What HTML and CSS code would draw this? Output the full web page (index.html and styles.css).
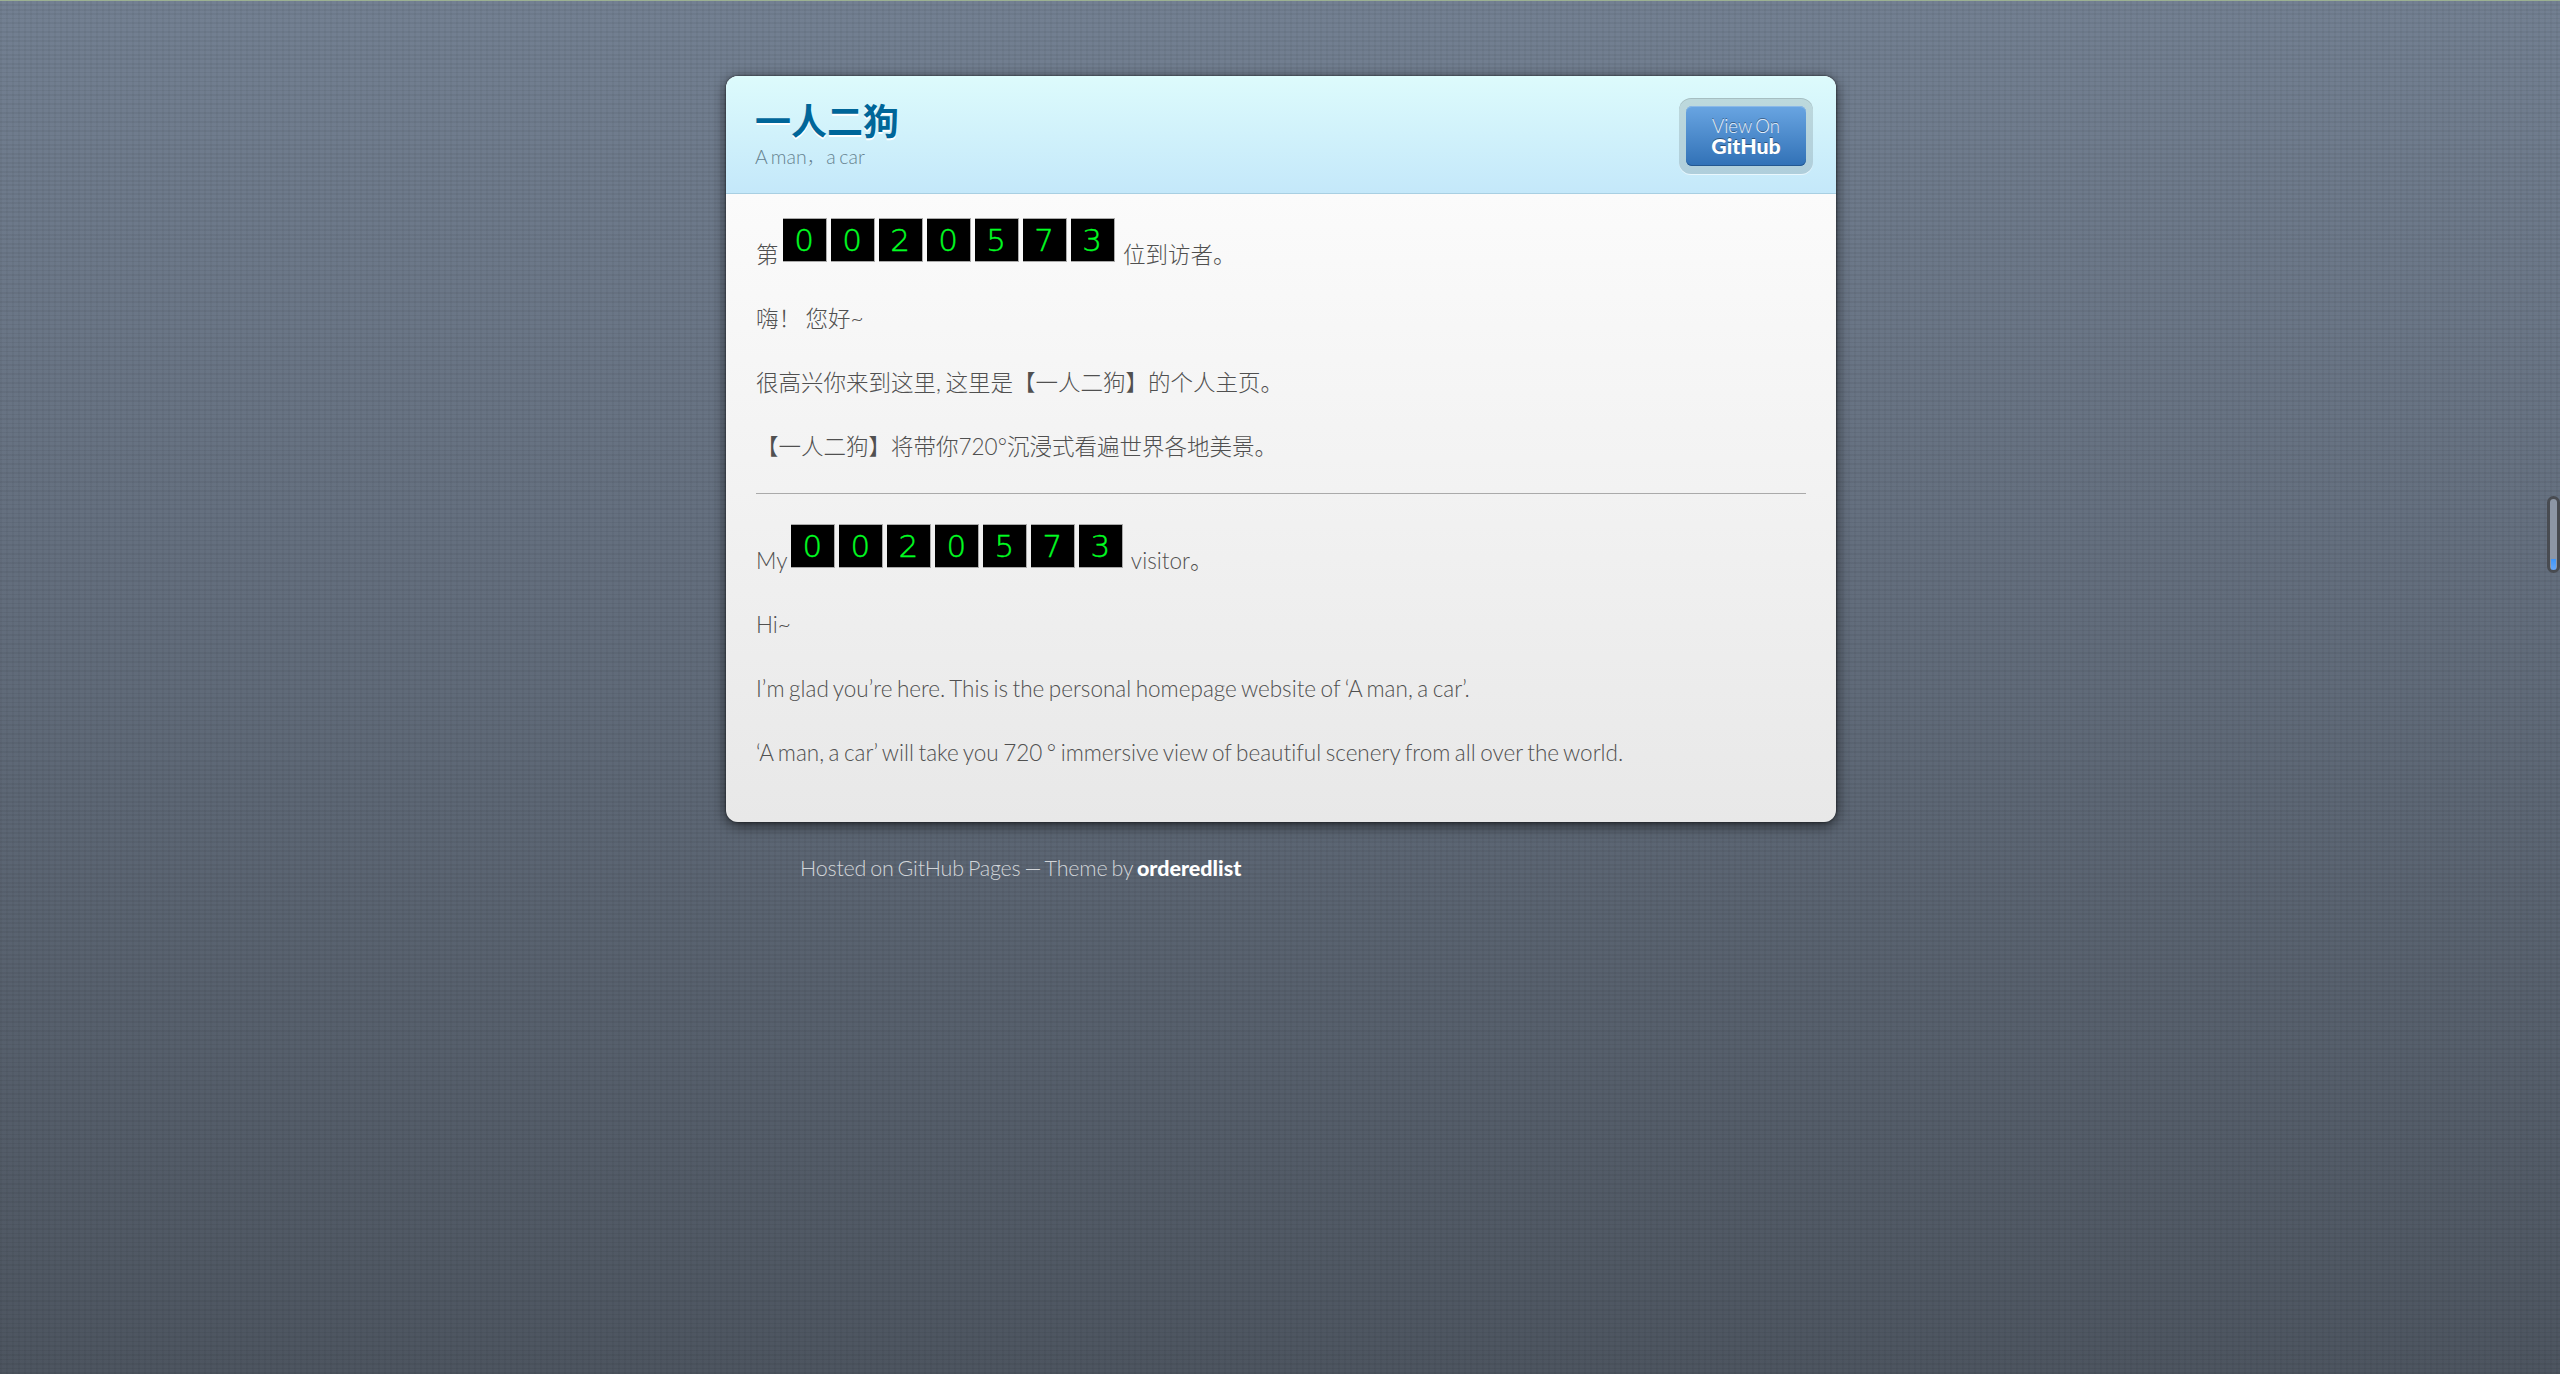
FILE: index.html
```html
<!DOCTYPE html>
<html lang="zh-CN">
<head>
<meta charset="utf-8">
<title>一人二狗</title>
<link rel="stylesheet" href="styles.css">
</head>
<body>
<div class="wrapper">
  <header class="header">
    <div>
      <h1 class="title">一人二狗</h1>
      <p class="tagline">A man<span class="comma">，</span>a car</p>
    </div>
    <a class="github"><span class="button">View On <strong>GitHub</strong></span></a>
  </header>
  <main class="content">
    <p>第 <span class="counter"><b>0</b><b>0</b><b>2</b><b>0</b><b>5</b><b>7</b><b>3</b></span> 位到访者。</p>
    <p>嗨！ 您好~</p>
    <p>很高兴你来到这里, 这里是【一人二狗】的个人主页。</p>
    <p>【一人二狗】将带你720°沉浸式看遍世界各地美景。</p>
    <hr>
    <p>My <span class="counter"><b>0</b><b>0</b><b>2</b><b>0</b><b>5</b><b>7</b><b>3</b></span> visitor。</p>
    <p>Hi~</p>
    <p>I’m glad you’re here. This is the personal homepage website of ‘A man, a car’.</p>
    <p>‘A man, a car’ will take you 720 ° immersive view of beautiful scenery from all over the world.</p>
  </main>
</div>
<footer class="footer">Hosted on GitHub Pages — Theme by <strong>orderedlist</strong></footer>
<div class="scroller"></div>
</body>
</html>
```
FILE: styles.css
```css
* { box-sizing: border-box; }
html { height: 100%; }
body {
  margin: 0;
  height: 1374px;
  overflow: hidden;
  border-top: 1px solid #9bb092;
  padding-top: 75px;
  font: 300 22.5px/34px Lato, "Noto Sans CJK SC", sans-serif;
  font-variant-ligatures: none;
  word-spacing: -1.6px;
  color: #505050;
  background:
    repeating-linear-gradient(180deg, rgba(0,0,0,.05) 0 1.5px, transparent 1.5px 4.5px),
    repeating-linear-gradient(90deg, rgba(0,0,0,.035) 0 2px, transparent 2px 6px),
    linear-gradient(#738092, #4d5560);
}
.wrapper {
  width: 1110px;
  height: 746px;
  margin: 0 auto 0 726px;
  border-radius: 12px;
  overflow: hidden;
  background: linear-gradient(#fbfbfb 118px, #e8e8e8);
  box-shadow: 0 3px 14px rgba(0,0,0,.65), 0 0 2px rgba(0,0,0,.8);
}
.header {
  display: flex;
  justify-content: space-between;
  height: 118px;
  padding: 22px 23px 0 29px;
  background: linear-gradient(#ddfbfc, #c4e8fa);
  border-bottom: 1px solid #a8cfe2;
}
.title {
  margin: 0;
  font-size: 36px;
  line-height: 46px;
  font-weight: 700;
  color: #069;
  text-shadow: 0 2px 0 #fff;
}
.tagline { margin: 0; font-size: 19.5px; line-height: 25px; color: #668390; }
.comma { font-weight: 100; }
.github {
  width: 134px;
  height: 76px;
  padding: 8px 7px;
  border-radius: 12px;
  background: rgba(0,0,0,.12);
  box-shadow: inset 0 1px 0 rgba(0,0,0,.12), 0 1px 0 rgba(255,255,255,.6);
}
.button {
  display: block;
  height: 60px;
  padding-top: 10px;
  border-radius: 6px;
  text-align: center;
  font-size: 18.6px;
  line-height: 20px;
  color: #eaf2fb;
  background: linear-gradient(#69a5e2, #3171b6);
  box-shadow: inset 0 1px 0 #8ab9e8, inset 0 -1px 0 #245891;
  text-shadow: 0 -1px 0 rgba(0,0,0,.4);
}
.button strong { display: block; font-size: 21.3px; font-weight: 900; color: #fff; }
.content { padding: 24px 30px; }
.content p { margin: 0 0 30px; }
hr { margin: -1px 0 30px; border: 0; border-top: 1px solid #aaa; }
.counter {
  display: inline-block;
  height: 44px;
  overflow: hidden;
  margin: 0 4px 1px -0.5px;
  font-size: 0;
}
.counter b {
  float: left;
  width: 44px;
  height: 44px;
  margin-right: 4px;
  background: #000;
  border: solid #aaa;
  border-width: 1px 1px 1px 0;
  color: #0f2;
  -webkit-text-stroke: 0.4px #0f2;
  text-align: center;
  font: 200 31px/42px "DejaVu Sans", sans-serif;
}
.counter b:last-child { margin-right: 0; }
.footer {
  margin: 29px 0 0 800px;
  font-size: 21.5px;
  letter-spacing: -0.21px;
  color: #d2d5d9;
}
.footer strong { font-weight: 900; color: #fff; letter-spacing: 0; }
.scroller {
  position: absolute;
  right: 0;
  top: 496px;
  width: 13px;
  height: 77px;
  border: 3px solid #484b51;
  border-radius: 7px;
  background: linear-gradient(#3e96fa, #68a6f4) 50% 100% / 5px 11px no-repeat, #8d96a5;
}
```
